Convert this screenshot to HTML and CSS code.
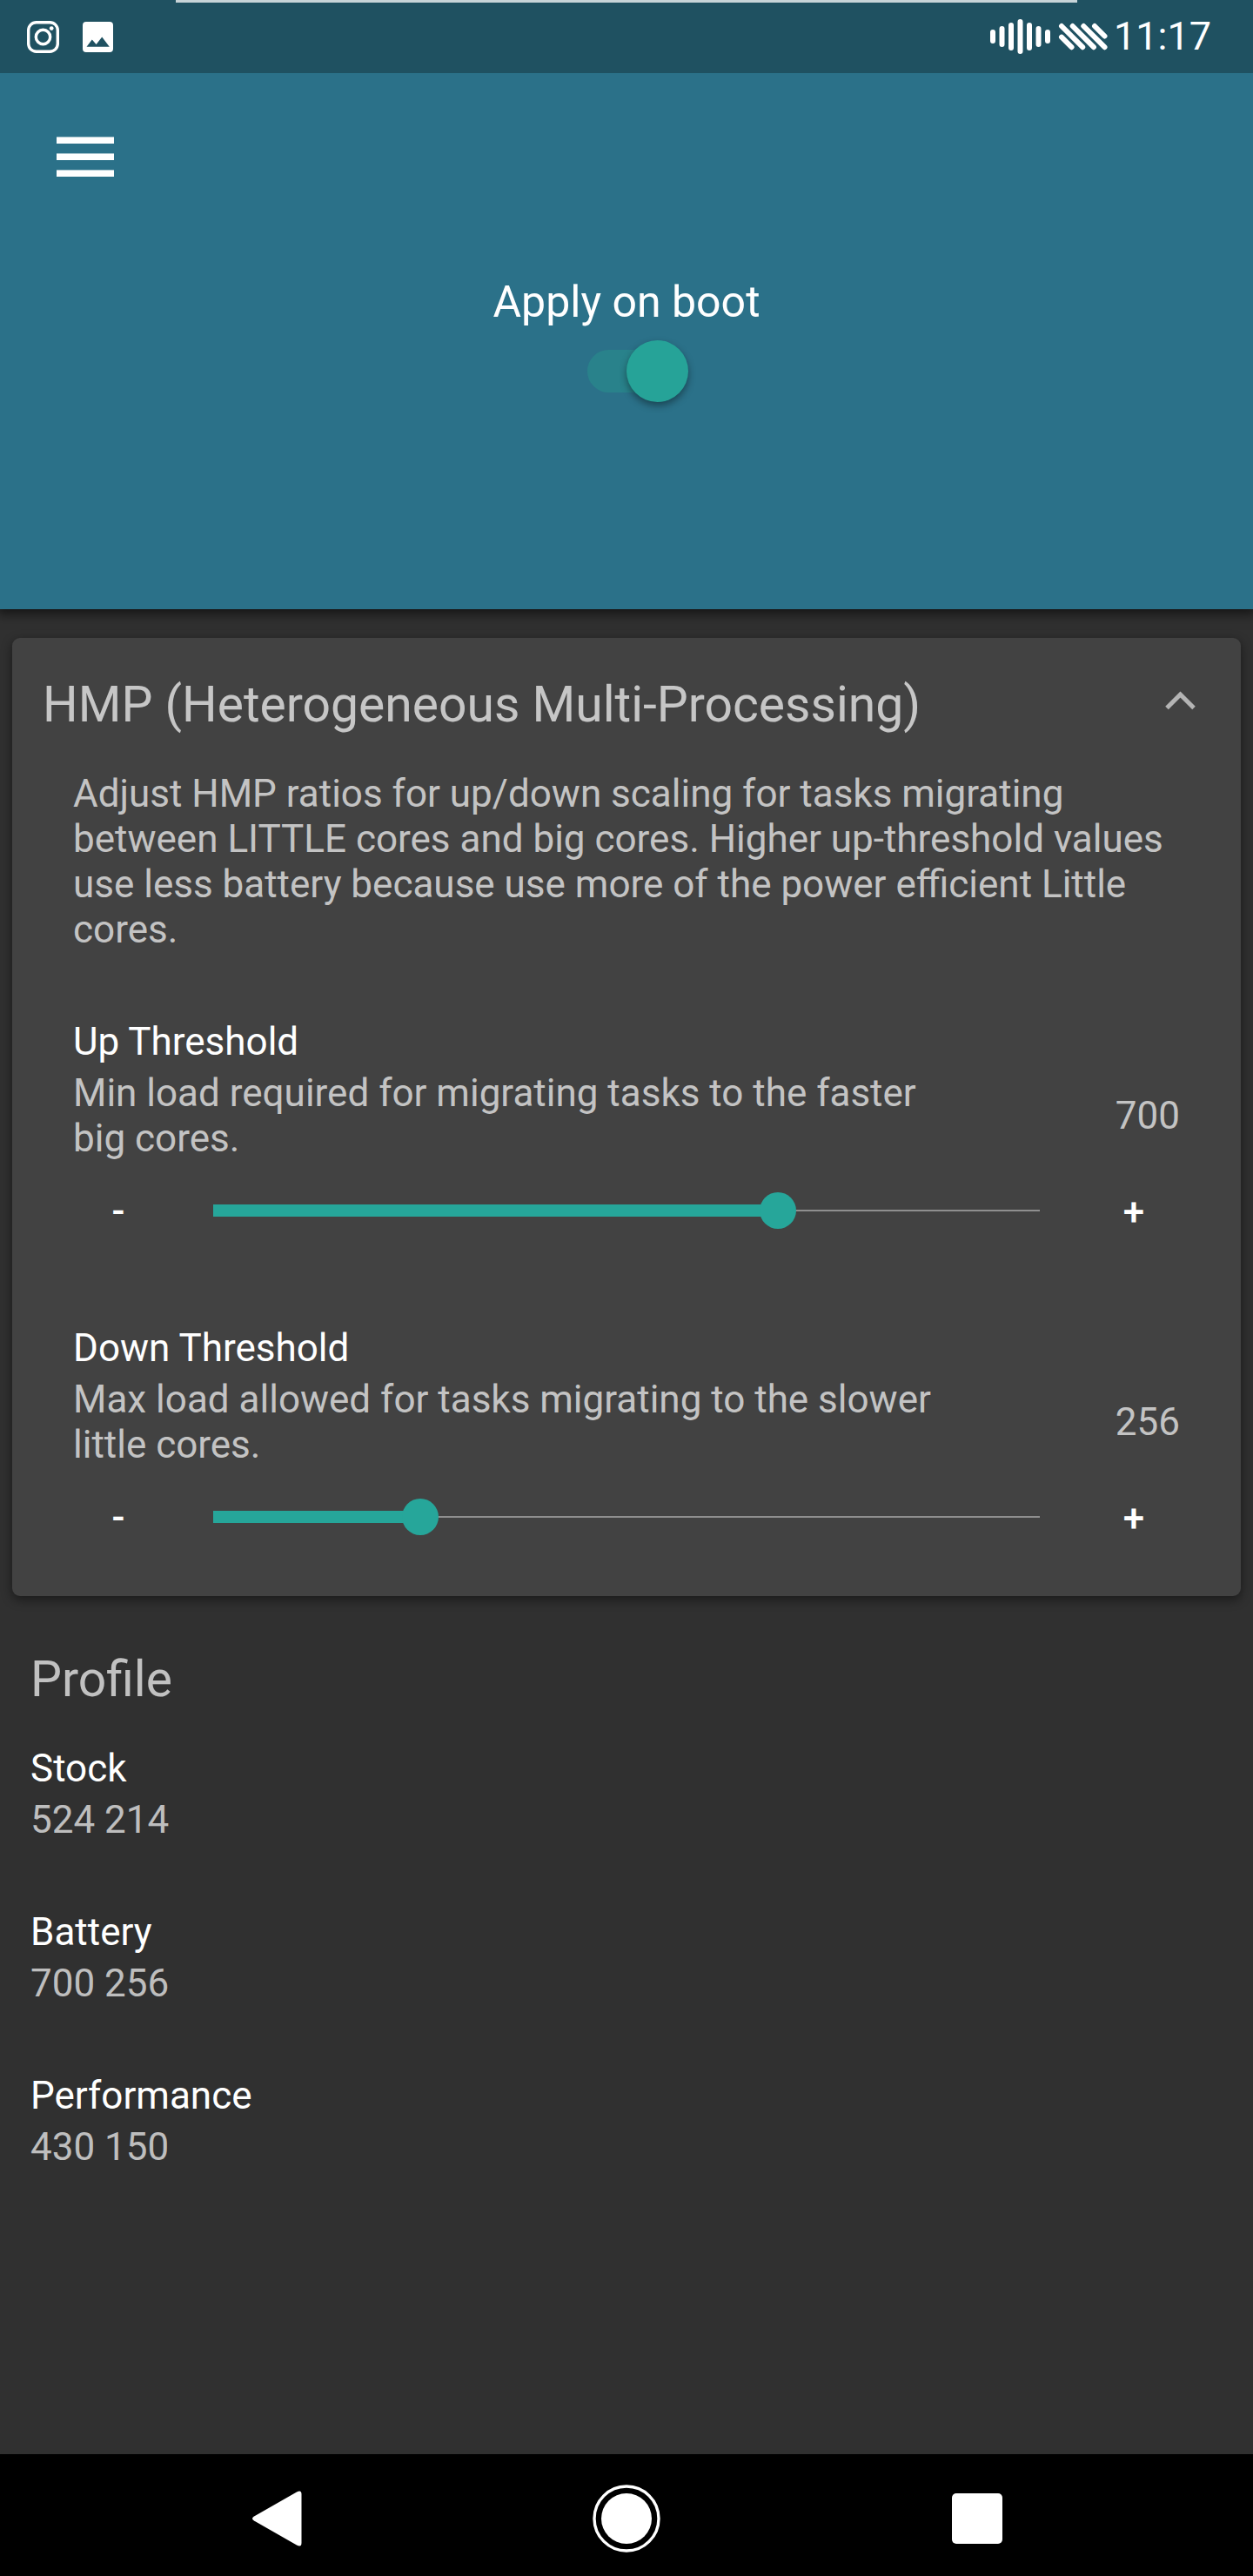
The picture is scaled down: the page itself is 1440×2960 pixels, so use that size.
FILE: index.html
```html
<!DOCTYPE html>
<html lang="en">
<head>
<meta charset="utf-8">
<title>HMP</title>
<link rel="stylesheet" href="styles.css">
</head>
<body>
<div class="screen">
  <header class="status-bar">
    <div class="status-strip"></div>
    <div class="status-left">
      <svg width="37" height="37" viewBox="0 0 37 37" fill="none" stroke="#fff">
        <rect x="1.7" y="1.7" width="33.6" height="33.6" rx="9" stroke-width="3.4"/>
        <circle cx="18.5" cy="18.5" r="8.2" stroke-width="3.4"/>
        <circle cx="28.2" cy="8.6" r="2.4" fill="#fff" stroke="none"/>
      </svg>
      <svg width="35" height="35" viewBox="0 0 35 35">
        <path fill="#fff" fill-rule="evenodd" d="M4 0H31A4 4 0 0 1 35 4V31A4 4 0 0 1 31 35H4A4 4 0 0 1 0 31V4A4 4 0 0 1 4 0ZM4.5 28.8H30.8L22.2 17.5L15.6 26L10.8 20.4Z"/>
      </svg>
    </div>
    <div class="status-right">
      <svg width="136" height="42" viewBox="0 0 136 42" fill="none" stroke="#fff" stroke-width="6" stroke-linecap="round">
        <path d="M4 16V26M14.5 12V30M25 8V34M35.5 4V38M46 8V34M56.5 12V30M67 16V26"/>
        <path d="M83 21.7L94.5 33.2M83 9L107.2 33.2M95.7 9L119.9 33.2M108.3 9L132.5 33.2M121 9L132.5 20.5"/>
      </svg>
      <span class="clock">11:17</span>
    </div>
  </header>

  <section class="banner">
    <svg class="menu" width="66" height="46" viewBox="0 0 66 46" fill="#fff">
      <rect y="0.4" width="66" height="7.6"/><rect y="19.4" width="66" height="7.6"/><rect y="38.4" width="66" height="7.6"/>
    </svg>
    <div class="boot">
      <span class="boot-label">Apply on boot</span>
      <div class="switch"><div class="switch-thumb"></div></div>
    </div>
  </section>

  <main class="content">
    <section class="card">
      <div class="card-head">
        <h1 class="heading">HMP (Heterogeneous Multi-Processing)</h1>
        <svg class="chevron" width="35" height="22" viewBox="0 0 35 22"><path d="M2 19.5L17.5 4L33 19.5" fill="none" stroke="#b4b4b4" stroke-width="5"/></svg>
      </div>
      <p class="description">Adjust HMP ratios for up/down scaling for tasks migrating between LITTLE cores and big cores. Higher up-threshold values use less battery because use more of the power efficient Little cores.</p>

      <div class="setting">
        <div class="setting-title">Up Threshold</div>
        <div class="setting-body">
          <p class="summary">Min load required for migrating tasks to the faster big cores.</p>
          <span class="value">700</span>
        </div>
        <div class="slider">
          <span class="step minus">-</span>
          <div class="track"><div class="fill" style="width:68.36%"><div class="thumb"></div></div></div>
          <span class="step plus">+</span>
        </div>
      </div>

      <div class="setting">
        <div class="setting-title">Down Threshold</div>
        <div class="setting-body">
          <p class="summary">Max load allowed for tasks migrating to the slower little cores.</p>
          <span class="value">256</span>
        </div>
        <div class="slider">
          <span class="step minus">-</span>
          <div class="track"><div class="fill" style="width:25%"><div class="thumb"></div></div></div>
          <span class="step plus">+</span>
        </div>
      </div>
    </section>

    <section class="profiles">
      <h2 class="heading">Profile</h2>
      <div class="profile"><span class="profile-name">Stock</span><span class="profile-values">524 214</span></div>
      <div class="profile"><span class="profile-name">Battery</span><span class="profile-values">700 256</span></div>
      <div class="profile"><span class="profile-name">Performance</span><span class="profile-values">430 150</span></div>
    </section>
  </main>

  <nav class="nav-bar">
    <svg class="nav-back" width="60" height="78" viewBox="0 0 60 78"><path d="M3 36.5L52 8.5Q57.5 5.5 57.5 11V67Q57.5 72.5 52 69.5L3 41.5Q-1 39 3 36.5Z" fill="#fff"/></svg>
    <svg width="78" height="78" viewBox="0 0 78 78"><circle cx="39" cy="39" r="37" fill="none" stroke="#fff" stroke-width="3.4"/><circle cx="39" cy="39" r="29" fill="#fff"/></svg>
    <svg width="58" height="58" viewBox="0 0 58 58"><rect width="58" height="58" rx="5" fill="#fff"/></svg>
  </nav>
</div>
</body>
</html>
```
FILE: styles.css
```css
* { box-sizing: border-box; }
body {
  margin: 0;
  background: #303030;
  font-family: Roboto, "Liberation Sans", sans-serif;
  font-size: 44px;
  line-height: 52px;
  color: #fff;
}
h1, h2, p { margin: 0; font-weight: 400; }
svg { display: block; flex: none; }
.screen {
  width: 1440px;
  height: 2960px;
  display: flex;
  flex-direction: column;
  overflow: hidden;
}

/* status bar */
.status-bar {
  position: relative;
  z-index: 1;
  flex: none;
  height: 84px;
  padding: 0 48px 0 31px;
  display: flex;
  justify-content: space-between;
  background: #1f5161;
}
.status-strip {
  position: absolute;
  top: 0;
  left: 202px;
  width: 1036px;
  height: 3px;
  background: #c7d4d8;
}
.status-left { display: flex; align-items: center; gap: 27px; }
.status-right { display: flex; align-items: center; gap: 7px; }
.clock { font-size: 45px; }

/* banner */
.banner {
  flex: none;
  height: 616px;
  padding: 73px 0 0 65px;
  background: #2b7189;
  box-shadow: 0 3px 12px 3px rgba(0, 0, 0, .55);
}
.boot {
  display: flex;
  flex-direction: column;
  align-items: center;
  margin: 114px 65px 0 0;
}
.boot-label { font-size: 50px; line-height: 60px; }
.switch {
  width: 106px;
  height: 49px;
  margin: 25px 0 0 16px;
  border-radius: 25px;
  background: #29828b;
  display: flex;
  align-items: center;
  justify-content: flex-end;
}
.switch-thumb {
  flex: none;
  width: 71px;
  height: 71px;
  margin-right: -10px;
  border-radius: 50%;
  background: #26a398;
  box-shadow: 0 4px 9px rgba(0, 0, 0, .4);
}

/* card */
.content { flex: 1; padding: 33px 14px 0; }
.card {
  height: 1101px;
  padding: 44px 70px 0;
  border-radius: 9px;
  background: #424242;
  box-shadow: 0 4px 12px 1px rgba(0, 0, 0, .42);
}
.heading {
  font-size: 57px;
  line-height: 66px;
  color: rgba(255, 255, 255, .7);
}
.card-head {
  display: flex;
  align-items: flex-start;
  justify-content: space-between;
  margin: 0 -18px 0 -35px;
}
.chevron { margin: 17px 0 0; }
.description {
  margin-top: 43px;
  color: rgba(255, 255, 255, .7);
}
.setting { padding-top: 77px; }
.setting + .setting { padding-top: 111px; }
.setting-body {
  display: flex;
  align-items: center;
  justify-content: space-between;
  margin-top: 7px;
  color: rgba(255, 255, 255, .7);
}
.summary { width: 1010px; }
.slider {
  display: flex;
  align-items: center;
  height: 42px;
  margin-top: 36px;
}
.step { font-weight: 500; text-align: center; width: 104px; }
.minus { margin-right: 57px; }
.plus { margin-left: 56px; padding-top: 3px; }
.track {
  width: 950px;
  height: 14px;
  display: flex;
  background: linear-gradient(#8f8f8f, #8f8f8f) center / 100% 2px no-repeat;
}
.fill {
  display: flex;
  align-items: center;
  justify-content: flex-end;
  background: #26a69a;
}
.thumb {
  flex: none;
  width: 42px;
  height: 42px;
  margin-right: -21px;
  border-radius: 50%;
  background: #26a69a;
}

/* profiles */
.profiles { padding: 63px 21px 0; }
.profiles .heading { margin-bottom: 43px; }
.profile {
  display: flex;
  flex-direction: column;
  gap: 7px;
  margin-bottom: 77px;
}
.profile-values { color: rgba(255, 255, 255, .7); }

/* navigation bar */
.nav-bar {
  flex: none;
  height: 140px;
  padding: 8px 288px 0 289px;
  display: flex;
  align-items: center;
  justify-content: space-between;
  background: #000;
}
.nav-back { margin-right: -3px; }
```
